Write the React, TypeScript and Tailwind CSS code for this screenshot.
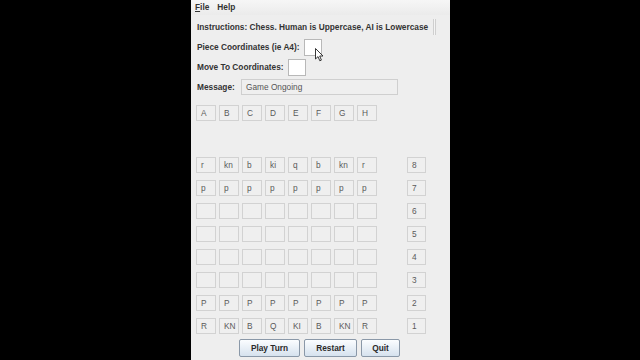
import React from "react";

const letters = ["A", "B", "C", "D", "E", "F", "G", "H"];

const board: string[][] = [
  ["r", "kn", "b", "ki", "q", "b", "kn", "r"],
  ["p", "p", "p", "p", "p", "p", "p", "p"],
  ["", "", "", "", "", "", "", ""],
  ["", "", "", "", "", "", "", ""],
  ["", "", "", "", "", "", "", ""],
  ["", "", "", "", "", "", "", ""],
  ["P", "P", "P", "P", "P", "P", "P", "P"],
  ["R", "KN", "B", "Q", "KI", "B", "KN", "R"],
];

const font = { fontFamily: '"Liberation Sans", Arial, sans-serif' };

function Cell({ text, wide }: { text: string; wide?: boolean }) {
  return (
    <div
      className={`h-[16px] ${wide ? "w-[19px]" : "w-[20px]"} border border-[#d2d2d2] bg-[#efefef] pl-[4px] text-[8.3px] leading-[14px] text-[#5a5a5a]`}
    >
      {text}
    </div>
  );
}

function Btn({ label, w }: { label: string; w: string }) {
  return (
    <button
      className={`h-[18px] ${w} rounded-[2px] border border-[#8a98a8] bg-gradient-to-b from-[#fbfdff] to-[#d6e2ee] text-[8.3px] font-bold text-[#2a2a2a]`}
    >
      {label}
    </button>
  );
}

export default function App() {
  return (
    <div className="flex h-[360px] w-[640px] bg-black" style={font}>
      <div className="ml-[191px] flex h-full w-[259px] flex-col bg-[#eeeeee] relative">
        {/* menu bar */}
        <div className="flex h-[15px] items-center gap-[8px] bg-gradient-to-b from-[#f6f6f6] to-[#ebebeb] pl-[4px] text-[8.3px] font-bold text-[#333]">
          <span>
            <span className="underline">F</span>ile
          </span>
          <span>Help</span>
        </div>

        <div className="mt-[2px] flex h-[20px] items-center pl-[6px] text-[8.3px] font-bold text-[#333]">
          <span>Instructions: Chess. Human is Uppercase, AI is Lowercase</span>
          <div className="ml-auto mr-[14px] h-[16px] w-[3px] border-x border-[#cfcfcf] bg-[#f4f4f4]" />
        </div>

        <div className="flex h-[20px] items-center gap-[4px] pl-[6px] text-[8.3px] font-bold text-[#333]">
          <span>Piece Coordinates (ie A4):</span>
          <div className="h-[17px] w-[18px] border border-[#b8b8b8] bg-white" />
        </div>

        <div className="flex h-[20px] items-center gap-[4px] pl-[6px] text-[8.3px] font-bold text-[#333]">
          <span>Move To Coordinates:</span>
          <div className="h-[17px] w-[18px] border border-[#b8b8b8] bg-white" />
        </div>

        <div className="flex h-[20px] items-center pl-[6px] text-[8.3px] text-[#333]">
          <span className="w-[44px] font-bold">Message:</span>
          <div className="flex h-[16px] w-[157px] items-center border border-[#cfcfcf] bg-[#efefef] pl-[4px] text-[#555]">
            Game Ongoing
          </div>
        </div>

        <div className="mt-[8px] flex gap-[3px] pl-[5px]">
          {letters.map((l) => (
            <Cell key={l} text={l} />
          ))}
        </div>

        <div className="mt-[36px] flex flex-col gap-[7px] pl-[5px]">
          {board.map((row, r) => (
            <div key={r} className="flex gap-[3px]">
              {row.map((c, i) => (
                <Cell key={i} text={c} />
              ))}
              <div className="ml-[27px]">
                <Cell text={String(8 - r)} wide />
              </div>
            </div>
          ))}
        </div>

        <div className="mt-[5px] flex gap-[4px] pl-[48px]">
          <Btn label="Play Turn" w="w-[61px]" />
          <Btn label="Restart" w="w-[53px]" />
          <Btn label="Quit" w="w-[39px]" />
        </div>

        {/* mouse cursor */}
        <svg
          className="absolute left-[124px] top-[48px]"
          width="9"
          height="14"
          viewBox="0 0 9 14"
        >
          <path
            d="M0.5 0.5 L0.5 11 L3 8.6 L4.8 12.8 L6.4 12.1 L4.7 8 L8 8 Z"
            fill="white"
            stroke="#222"
            strokeWidth="0.9"
          />
        </svg>
      </div>
    </div>
  );
}
